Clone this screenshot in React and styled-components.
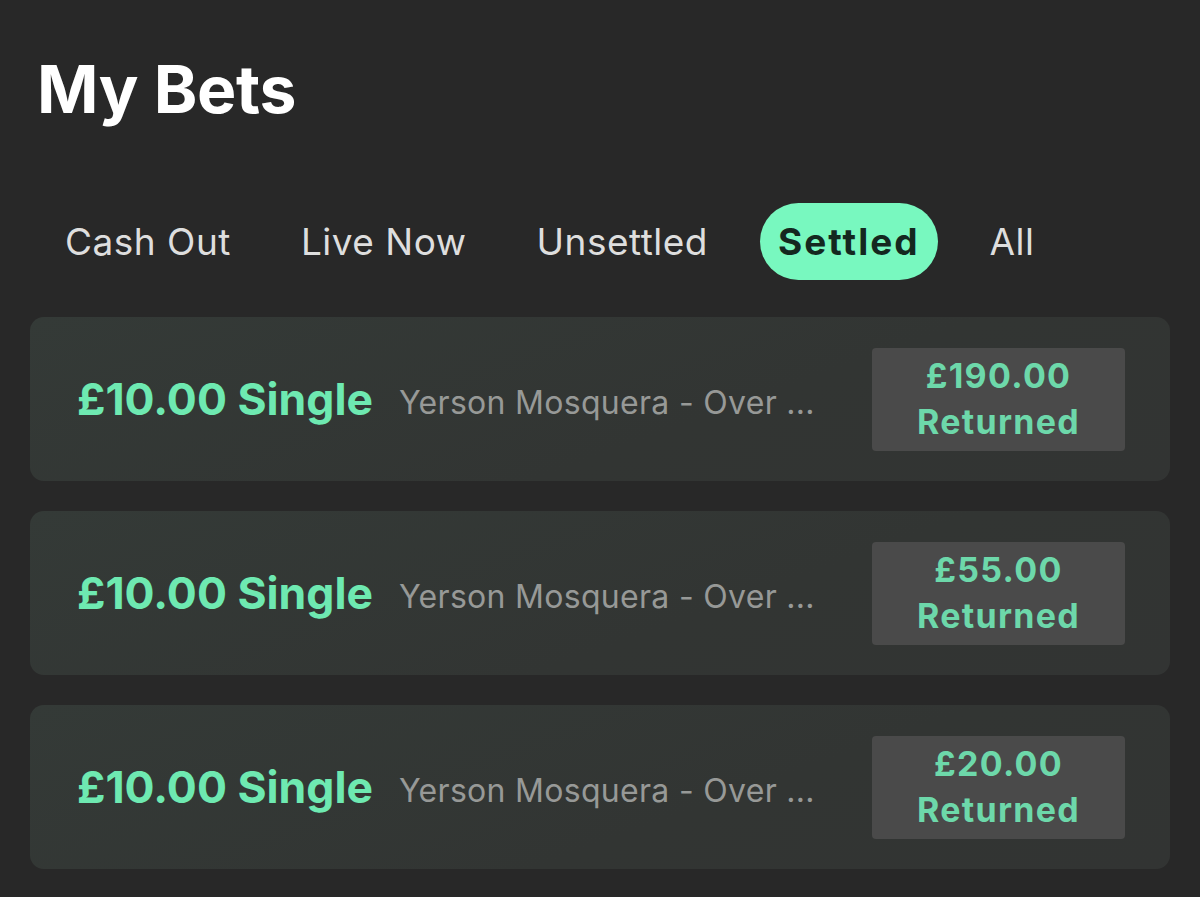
import React from "react";
import styled, { createGlobalStyle } from "styled-components";

const Global = createGlobalStyle`
  html, body { margin: 0; padding: 0; background: #282828; }
  body { font-family: Inter, "Noto Sans", sans-serif; }
`;

const Page = styled.div`
  width: 1200px;
  height: 897px;
  overflow: hidden;
  background: #282828;
  padding: 0 30px;
  box-sizing: border-box;
`;

const Title = styled.h1`
  margin: 0;
  padding: 50px 0 0 7px;
  font-family: Inter, sans-serif;
  font-weight: 700;
  font-size: 66px;
  line-height: 78px;
  color: #ffffff;
  letter-spacing: -0.3px;
`;

const Tabs = styled.div`
  display: flex;
  align-items: center;
  gap: 34px;
  margin-top: 75px;
  padding-left: 17px;
`;

const Tab = styled.div`
  height: 77px;
  display: flex;
  align-items: center;
  padding: 0 18px;
  border-radius: 39px;
  font-family: Inter, sans-serif;
  font-size: 37px;
  letter-spacing: ${(p) => (p.$active ? "2px" : "0.5px")};
  font-weight: ${(p) => (p.$active ? 700 : 400)};
  color: ${(p) => (p.$active ? "#14281f" : "#dedede")};
  background: ${(p) => (p.$active ? "#78f8bf" : "transparent")};
`;

const List = styled.div`
  display: flex;
  flex-direction: column;
  gap: 30px;
  margin-top: 37px;
`;

const Card = styled.div`
  height: 164px;
  box-sizing: border-box;
  border-radius: 14px;
  background: linear-gradient(160deg, #343a37 0%, #323533 60%, #323433 100%);
  display: flex;
  align-items: center;
  padding: 0 45px 0 47px;
`;

const Stake = styled.div`
  font-family: Inter, sans-serif;
  font-weight: 700;
  font-size: 44.5px;
  color: #6ee9b1;
  white-space: nowrap;
`;

const Selection = styled.div`
  flex: 1;
  margin-left: 26px;
  font-family: Inter, sans-serif;
  font-size: 32px;
  letter-spacing: 0.3px;
  color: #979997;
  white-space: nowrap;
  overflow: hidden;
  margin-top: 6px;
`;

const Returned = styled.div`
  width: 253px;
  height: 103px;
  border-radius: 4px;
  background: #4a4a4a;
  display: flex;
  flex-direction: column;
  align-items: center;
  justify-content: center;
  font-family: Inter, sans-serif;
  font-weight: 700;
  font-size: 34px;
  letter-spacing: 1.3px;
  line-height: 46px;
  color: #6dd8aa;
`;

const tabs = ["Cash Out", "Live Now", "Unsettled", "Settled", "All"];
const bets = ["£190.00", "£55.00", "£20.00"];

export default function App() {
  return (
    <Page>
      <Global />
      <Title>My Bets</Title>
      <Tabs>
        {tabs.map((t) => (
          <Tab key={t} $active={t === "Settled"}>
            {t}
          </Tab>
        ))}
      </Tabs>
      <List>
        {bets.map((b, i) => (
          <Card key={i}>
            <Stake>£10.00 Single</Stake>
            <Selection>Yerson Mosquera - Over ...</Selection>
            <Returned>
              <span>{b}</span>
              <span>Returned</span>
            </Returned>
          </Card>
        ))}
      </List>
    </Page>
  );
}
